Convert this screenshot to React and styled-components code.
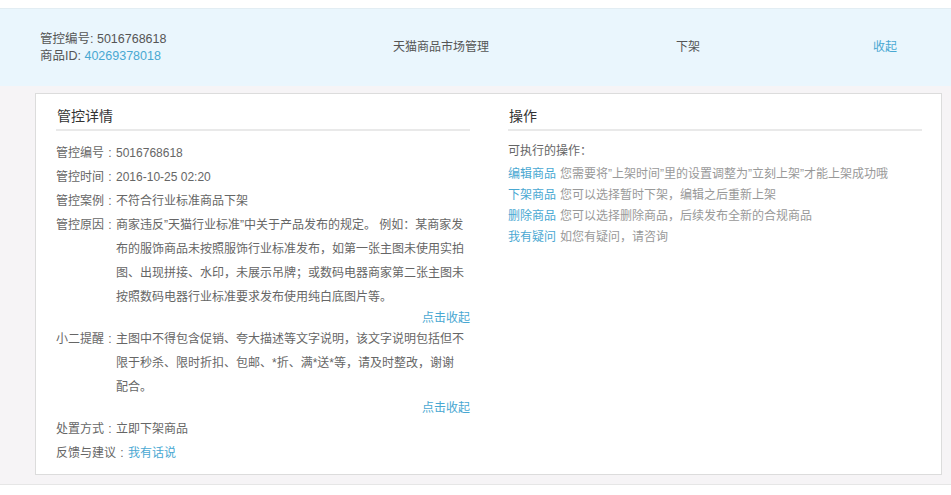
import React from "react";
import styled, { createGlobalStyle } from "styled-components";

const GlobalStyle = createGlobalStyle`
  html, body {
    margin: 0;
    padding: 0;
    background: #fff;
  }
  body {
    font-family: "Liberation Sans", "Noto Sans CJK SC", sans-serif;
    font-size: 12px;
    color: #666;
  }
`;

const Page = styled.div`
  width: 951px;
  padding-top: 8px;
`;

const Summary = styled.div`
  display: grid;
  grid-template-columns: 330px 222px 272px 122px;
  align-items: center;
  height: 77px;
  border-top: 1px solid #e2edf3;
  background-color: #eaf6fd;
  color: #555;
  font-size: 12px;
`;

const SummaryCell = styled.div`
  text-align: ${(p) => (p.$center ? "center" : "left")};
  padding-left: ${(p) => (p.$center ? "0" : "40px")};
  line-height: 17px;
  font-size: ${(p) => (p.$center ? "12px" : "12.5px")};
`;

const Link = styled.a`
  color: #49a8d2;
  text-decoration: none;
  cursor: pointer;
`;

const Body = styled.div`
  background-color: #f6f4f6;
  padding: 7px 9px 9px 35px;
  border-bottom: 1px solid #e6e6e6;
`;

const Panel = styled.div`
  background: #fff;
  border: 1px solid #dcdcdc;
  padding: 0 20px 9px;
  display: grid;
  grid-template-columns: 414px 414px;
  column-gap: 38px;
`;

const Section = styled.div`
  display: flex;
  flex-direction: column;
`;

const SectionTitle = styled.h3`
  margin: 0 0 10px;
  padding: 12px 0 3px 1px;
  font-size: 14px;
  font-weight: normal;
  line-height: 20px;
  color: #333;
  border-bottom: 2px solid #e9e9e9;
`;

const Row = styled.div`
  display: flex;
  line-height: 24px;
`;

const Label = styled.span`
  flex: none;
  white-space: nowrap;

  &::after {
    content: ":";
    display: inline-block;
    width: 12px;
    text-align: center;
  }
`;

const Value = styled.span`
  flex: 1;
  padding-right: 5px;
`;

const Toggle = styled.div`
  text-align: right;
  line-height: 18px;
`;

const Intro = styled.div`
  line-height: 21px;
  margin-bottom: 2px;
`;

const Action = styled.div`
  line-height: 21px;
  color: #999;

  ${Link} {
    margin-right: 4px;
  }
`;

const actions = [
  ["编辑商品", "您需要将”上架时间”里的设置调整为”立刻上架”才能上架成功哦"],
  ["下架商品", "您可以选择暂时下架，编辑之后重新上架"],
  ["删除商品", "您可以选择删除商品，后续发布全新的合规商品"],
  ["我有疑问", "如您有疑问，请咨询"],
];

export default function App() {
  return (
    <Page>
      <GlobalStyle />
      <Summary>
        <SummaryCell>
          <div>管控编号: 5016768618</div>
          <div>
            商品ID: <Link>40269378018</Link>
          </div>
        </SummaryCell>
        <SummaryCell $center>天猫商品市场管理</SummaryCell>
        <SummaryCell $center>下架</SummaryCell>
        <SummaryCell $center>
          <Link>收起</Link>
        </SummaryCell>
      </Summary>
      <Body>
        <Panel>
          <Section>
            <SectionTitle>管控详情</SectionTitle>
            <Row>
              <Label>管控编号</Label>
              <Value>5016768618</Value>
            </Row>
            <Row>
              <Label>管控时间</Label>
              <Value>2016-10-25 02:20</Value>
            </Row>
            <Row>
              <Label>管控案例</Label>
              <Value>不符合行业标准商品下架</Value>
            </Row>
            <Row>
              <Label>管控原因</Label>
              <Value>
                商家违反”天猫行业标准”中关于产品发布的规定。 例如：某商家发布的服饰商品未按照服饰行业标准发布，如第一张主图未使用实拍图、出现拼接、水印，未展示吊牌；或数码电器商家第二张主图未按照数码电器行业标准要求发布使用纯白底图片等。
              </Value>
            </Row>
            <Toggle>
              <Link>点击收起</Link>
            </Toggle>
            <Row>
              <Label>小二提醒</Label>
              <Value>
                主图中不得包含促销、夸大描述等文字说明，该文字说明包括但不限于秒杀、限时折扣、包邮、*折、满*送*等，请及时整改，谢谢配合。
              </Value>
            </Row>
            <Toggle>
              <Link>点击收起</Link>
            </Toggle>
            <Row>
              <Label>处置方式</Label>
              <Value>立即下架商品</Value>
            </Row>
            <Row>
              <Label>反馈与建议</Label>
              <Value>
                <Link>我有话说</Link>
              </Value>
            </Row>
          </Section>
          <Section>
            <SectionTitle>操作</SectionTitle>
            <Intro>可执行的操作：</Intro>
            {actions.map(([name, desc]) => (
              <Action key={name}>
                <Link>{name}</Link>
                {desc}
              </Action>
            ))}
          </Section>
        </Panel>
      </Body>
    </Page>
  );
}
